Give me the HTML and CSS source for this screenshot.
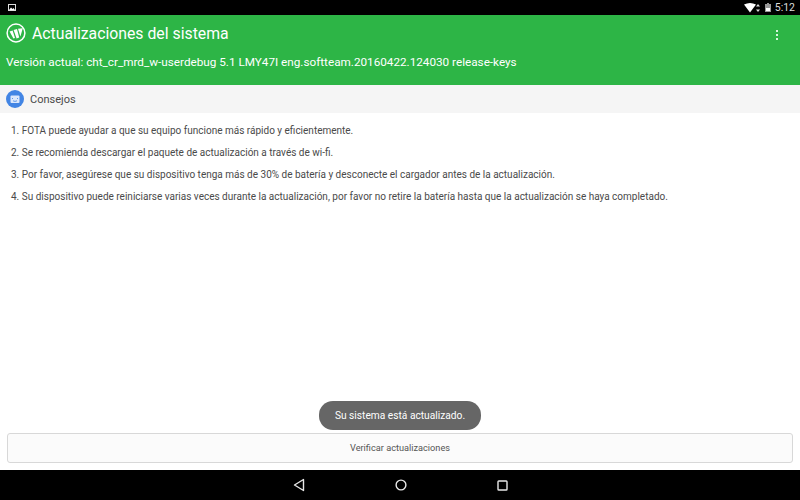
FILE: index.html
```html
<!DOCTYPE html>
<html lang="es">
<head>
    <meta charset="UTF-8">
    <title>Actualizaciones del sistema</title>
    <link rel="stylesheet" href="styles.css">
</head>
<body>
    <div class="statusbar">
        <svg class="status-image" width="8" height="7" viewBox="0 0 8 7">
            <rect x="0.5" y="0.5" width="7" height="6" fill="none" stroke="#ddd"/>
            <path d="M1 6 L3 3.5 L4.5 5 L5.5 4 L7 6 Z" fill="#fff"/>
        </svg>
        <div class="status-right">
            <svg width="16" height="10" viewBox="0 0 16 10">
                <path d="M0 1.5 Q6 -1.5 12 1.5 L6 9.5 Z" fill="#fff"/>
                <path d="M14 1 L16 3.5 H12 Z M14 9 L12 6.5 H16 Z" fill="#ddd"/>
            </svg>
            <svg class="battery" width="6" height="9" viewBox="0 0 6 9">
                <path d="M2 0 H4 V1 H6 V9 H0 V1 H2 Z" fill="#999"/>
                <rect x="1" y="5" width="4" height="3" fill="#fff"/>
            </svg>
            <span class="clock">5:12</span>
        </div>
    </div>

    <div class="appbar">
        <div class="appbar-top">
            <svg class="logo" width="20" height="20" viewBox="0 0 20 20">
                <circle cx="10" cy="10" r="8.9" fill="none" stroke="#fff" stroke-width="1.5"/>
                <path d="M3.6 8.6 L6.6 7.4 L9 15 L7.4 15.4 Z M7.6 7 L11 6 L13.2 14.6 L10.6 15.4 Z M12 5.8 L16.8 5.2 L14.4 13.6 Z" fill="#fff"/>
            </svg>
            <h1 class="title">Actualizaciones del sistema</h1>
            <div class="overflow"><span></span><span></span><span></span></div>
        </div>
        <p class="version">Versión actual: cht_cr_mrd_w-userdebug 5.1 LMY47I eng.softteam.20160422.124030 release-keys</p>
    </div>

    <div class="section-head">
        <svg width="18" height="18" viewBox="0 0 18 18">
            <circle cx="9" cy="9" r="9" fill="#4285e4"/>
            <rect x="4.5" y="5.5" width="9" height="7.5" rx="1" fill="#dce8fb"/>
            <path d="M6.5 8 V9 M11.5 8 V9 M7 10.8 Q9 12 11 10.8" fill="none" stroke="#4285e4" stroke-width="0.8"/>
        </svg>
        <span>Consejos</span>
    </div>

    <div class="tips">
        <p>1. FOTA puede ayudar a que su equipo funcione más rápido y eficientemente.</p>
        <p>2. Se recomienda descargar el paquete de actualización a través de wi-fi.</p>
        <p>3. Por favor, asegúrese que su dispositivo tenga más de 30% de batería y desconecte el cargador antes de la actualización.</p>
        <p>4. Su dispositivo puede reiniciarse varias veces durante la actualización, por favor no retire la batería hasta que la actualización se haya completado.</p>
    </div>

    <div class="footer">
        <button class="check-btn">Verificar actualizaciones</button>
    </div>

    <div class="toast">Su sistema está actualizado.</div>

    <div class="navbar">
        <svg class="nav-back" width="12" height="14" viewBox="0 0 12 14"><path d="M10.5 1.5 V12.5 L1.5 7 Z" fill="none" stroke="#e8e8e8" stroke-width="1.4" stroke-linejoin="round"/></svg>
        <svg width="12" height="12" viewBox="0 0 12 12"><circle cx="6" cy="6" r="4.9" fill="none" stroke="#e8e8e8" stroke-width="1.4"/></svg>
        <svg width="11" height="11" viewBox="0 0 11 11"><rect x="1" y="1" width="9" height="9" rx="0.8" fill="none" stroke="#e8e8e8" stroke-width="1.4"/></svg>
    </div>
</body>
</html>
```

FILE: styles.css
```css
html, body {
  height: 100%;
}

body {
  margin: 0;
  position: relative;
  display: flex;
  flex-direction: column;
  font-family: Roboto, "Liberation Sans", sans-serif;
  background: #fff;
  overflow: hidden;
}

/* Status bar */
.statusbar {
  height: 15px;
  flex: none;
  background: #000;
  display: flex;
  align-items: center;
  justify-content: space-between;
  padding: 0 5px 0 8px;
}
.status-right {
  display: flex;
  align-items: center;
  gap: 5px;
}
.clock {
  color: #ddd;
  font-size: 10.5px;
  margin-left: -1px;
}

/* Green header */
.appbar {
  height: 70px;
  flex: none;
  box-sizing: border-box;
  background: #2db546;
  color: #fff;
  padding: 8px 6px 0;
}
.appbar-top {
  display: flex;
  align-items: center;
  height: 20px;
}
.title {
  margin: 0 0 0 6px;
  flex: 1;
  font-size: 15.8px;
  font-weight: 400;
}
.overflow {
  display: flex;
  flex-direction: column;
  gap: 2px;
  margin-right: 16px;
  margin-top: 3px;
}
.overflow span {
  width: 2px;
  height: 2px;
  background: #d8f5dd;
}
.version {
  margin: 12px 0 0;
  font-size: 11.72px;
}

/* Consejos */
.section-head {
  height: 28px;
  flex: none;
  display: flex;
  align-items: center;
  gap: 6px;
  padding-left: 6px;
  background: #f5f5f5;
  color: #4a4a4a;
  font-size: 11px;
}
.tips {
  flex: 1;
  padding: 12px 11px 0;
  color: #4a4a4a;
  font-size: 10px;
}
.tips p {
  margin: 0 0 9.5px;
  line-height: 12.5px;
}

/* Bottom button */
.footer {
  flex: none;
  padding: 0 7px 7px;
}
.check-btn {
  display: block;
  width: 100%;
  height: 30px;
  padding: 0 0 2px;
  background: #fbfbfb;
  border: 1px solid #d8d8d8;
  border-radius: 3px;
  color: #555;
  font-family: inherit;
  font-size: 9.2px;
}

.toast {
  position: absolute;
  left: 319px;
  top: 401px;
  width: 162px;
  height: 29px;
  line-height: 29px;
  border-radius: 14px;
  background: #666;
  color: #fff;
  font-size: 10.2px;
  text-align: center;
}

/* Navigation */
.navbar {
  height: 30px;
  flex: none;
  background: #000;
  display: flex;
  align-items: center;
  justify-content: center;
  gap: 90px;
}
```
